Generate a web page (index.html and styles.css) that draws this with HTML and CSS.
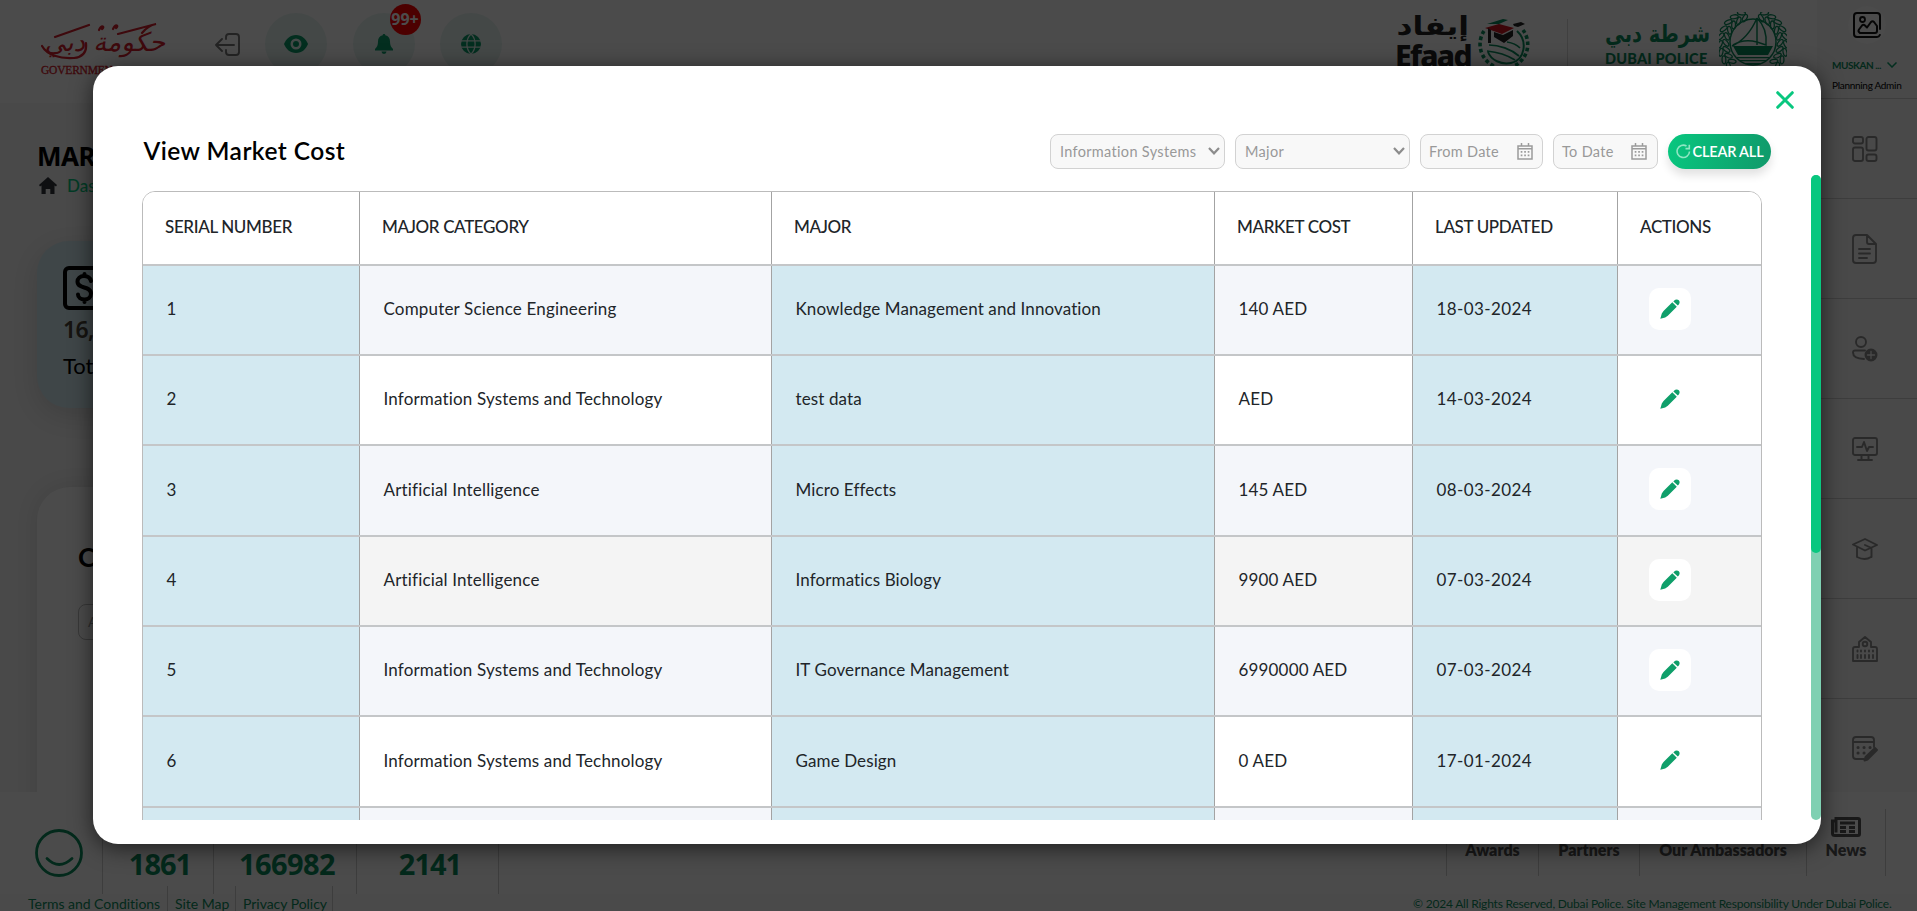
FILE: index.html
```html
<!DOCTYPE html>
<html lang="en">
<head>
<meta charset="utf-8">
<title>View Market Cost</title>
<link rel="stylesheet" href="styles.css">
</head>
<body>
<svg class="defs" width="0" height="0">
  <symbol id="pencil" viewBox="0 0 20 20"><path d="M14 1.800c1.400-1.500 3.600-1.600 4.800-.5s1.100 3.300-.4 4.700l-.6.600-4.400-4.200zM12.300 3.300l4.500 4.400-9 9-2.600 1.700L.3 19.800l1.500-5.300 1.700-2.600z"/></symbol>
  <symbol id="cal" viewBox="0 0 16 17"><path fill="none" stroke="#9b9b9b" stroke-width="1.500" d="M1 3h14v13H1zM4.500 0v3M11.500 0v3"/><path fill="#9b9b9b" d="M1 5h14v1.600H1zM3.700 8h1.700v1.700H3.700zm3.500 0h1.700v1.700H7.200zm3.500 0h1.700v1.700h-1.700zM3.700 11.500h1.700v1.700H3.700zm3.500 0h1.700v1.700H7.200zm3.500 0h1.700v1.700h-1.700z"/></symbol>
  <g id="leaves"><ellipse cx="31" cy="5" rx="1.900" ry="4" transform="rotate(125 31 5)"/><ellipse cx="32" cy="-1" rx="1.900" ry="4" transform="rotate(60 32 -1)"/></g>
  <g id="branch"><use href="#leaves" transform="rotate(24 34 32)"/><use href="#leaves" transform="rotate(38 34 32)"/><use href="#leaves" transform="rotate(52 34 32)"/><use href="#leaves" transform="rotate(66 34 32)"/><use href="#leaves" transform="rotate(80 34 32)"/><use href="#leaves" transform="rotate(94 34 32)"/><use href="#leaves" transform="rotate(108 34 32)"/><use href="#leaves" transform="rotate(122 34 32)"/><use href="#leaves" transform="rotate(136 34 32)"/></g>
</svg>
<div class="page">
  <div class="upper">
    <div class="main">
      <header class="topbar">
        <div class="gov">
          <div class="gov-ar" dir="rtl">حكومة دبي</div>
          <svg class="gov-swoosh" width="126" height="48" viewBox="0 0 126 48"><g fill="none" stroke="#d0202c" stroke-width="2.200" stroke-linecap="round"><path d="M1 24c5 9 18 13 32 12 9-1 13-6 12-15M14 15 48 3M77 12l38-10c-5 1-10 4-14 9M58 8c3-6 6-3 3-1M72 7c3-6 6-3 3-1"/></g></svg>
          <div class="gov-en">GOVERNMEN</div>
        </div>
        <svg class="logout" width="26" height="26" viewBox="0 0 26 26"><path fill="none" stroke="#777" stroke-width="1.900" stroke-linecap="round" stroke-linejoin="round" d="M11 7V5q0-3 3-3h7q3 0 3 3v15q0 3-3 3h-7q-3 0-3-3v-2M19 13H1m6-6-6 6 6 6"/></svg>
        <div class="round"><svg width="24" height="18" viewBox="0 0 24 18"><path fill="#0b9b68" fill-rule="evenodd" d="M12 0C6 0 2 4 0 9c2 5 6 9 12 9s10-4 12-9c-2-5-6-9-12-9zm0 3.500a5.500 5.500 0 1 1 0 11 5.500 5.500 0 0 1 0-11zM12 6a3 3 0 1 0 0 6 3 3 0 0 0 0-6z"/></svg></div>
        <div class="round bell"><svg width="18" height="20" viewBox="0 0 18 20"><path fill="#0b9b68" d="M9 0c.8 0 1.300.5 1.300 1.300C13.500 2 15 4.500 15 7.500c0 4 1 5.500 3 7.500v1.500H0V15c2-2 3-3.500 3-7.500 0-3 1.500-5.500 4.700-6.200C7.700.5 8.200 0 9 0zM6.500 17.500h5a2.500 2.500 0 0 1-5 0z"/></svg><span class="badge">99+</span></div>
        <div class="round"><svg width="20" height="20" viewBox="0 0 20 20"><circle cx="10" cy="10" r="10" fill="#0b9b68"/><path fill="none" stroke="#dfeeea" stroke-width="1.300" d="M0 6.800h20M0 13.200h20M10 0c-5.500 5-5.500 15 0 20M10 0c5.500 5 5.500 15 0 20"/></svg></div>
        <div class="efaad"><div class="efaad-ar" dir="rtl">إيفاد</div><div class="efaad-en">Efaad</div></div>
        <svg class="efaad-logo" width="54" height="54" viewBox="0 0 54 54"><path fill="none" stroke="#0b8a5c" stroke-width="3.600" stroke-dasharray="3.600 2.600" d="M7 12a24 24 0 0 0 10 35m29-36a24 24 0 0 1-9 36"/><path fill="none" stroke="#0b8a5c" stroke-width="2" d="M40 12c11 10 8 29-6 32-10 2-20-3-23-11"/><path fill="none" stroke="#0b8a5c" stroke-width="1.700" d="M12 26c10 0 22 4 30 11M10 32c10 1 20 4 28 9M30 23c6 1 10 3 13 6"/><path fill="#0b8a5c" d="m10 5 16-5 5 1-9 4zM16 46q12 7 24 0l-3 6q-9 3-17 0z"/><path fill="#c8141e" d="m8 9 14-4 15 4-12 6z"/><path fill="#222" d="m36 5 8-2 4 2-7 3-4-1zM17 13l9 3 10-5v6l-9 7-10-6zM11 9l3 2v13h-3z"/></svg>
        <div class="logo-sep"></div>
        <div class="police"><div class="police-ar" dir="rtl">شرطة دبي</div><div class="police-en">DUBAI POLICE</div></div>
        <svg class="police-logo" width="68" height="62" viewBox="0 0 68 62"><g fill="none" stroke="#0b8a5c" stroke-width="1.300"><use href="#branch"/><use href="#branch" transform="translate(68) scale(-1 1)"/></g><circle cx="34" cy="30" r="23" fill="none" stroke="#0b8a5c" stroke-width="1.500"/><path fill="#0b8a5c" d="M14 34h40l-5 9H19zM18 45h32v1.200H18zm3 3h26v1.200H21zm5 3h16v1.200H26z"/><path fill="none" stroke="#0b8a5c" stroke-width="1.500" d="M38 6v27M38 6C32 20 24 29 13 34M14 33c8-5 17-5 24-3M38 6c8 8 10 17 9 27l-9-3"/></svg>
      </header>
      <h1 class="page-title">MAR</h1>
      <div class="crumb"><svg width="18" height="17" viewBox="0 0 18 17"><path fill="#30353b" d="m9 0 9 8-1 1.500-1.500-1V17h-4.200v-5H6.700v5H2.500V8.500L1 9.500 0 8z"/></svg><span>Das</span></div>
      <section class="stat">
        <svg width="44" height="44" viewBox="0 0 44 44"><rect x="2" y="2" width="60" height="40" rx="4" fill="none" stroke="#000" stroke-width="4"/><path fill="none" stroke="#000" stroke-width="4" stroke-linecap="round" d="M28 15c-1-4-4-5-7-5-4 0-6.500 2.500-6.500 5.500 0 8 13.500 4 13.500 12 0 4-3 6-6.500 6s-6.500-2-6.500-5M21.500 8v2m0 24v2"/></svg>
        <div class="stat-num">16,</div>
        <div class="stat-label">Tot</div>
      </section>
      <section class="chart"><div class="chart-title">C</div><div class="chart-select">A</div></section>
    </div>
    <aside class="rail">
      <div class="user">
        <div class="avatar"><svg width="28" height="26" viewBox="0 0 28 26"><path fill="none" stroke="#111" stroke-width="2" stroke-linecap="round" stroke-linejoin="round" d="M27 17V4q0-3-3-3H4Q1 1 1 4v18q0 3 3 3h20q2 0 2.800-2M6 20q-1-1 0-2.500l3-4q1.500-1.500 3 0l2 2 4-5.500q1.500-1.500 3 0l3 4v5q0 2-2 2H7z"/><circle cx="9.500" cy="7.500" r="2.500" fill="none" stroke="#111" stroke-width="1.800"/></svg></div>
        <div class="user-name">MUSKAN ... <svg width="10" height="6" viewBox="0 0 10 6"><path fill="none" stroke="#0b9b68" stroke-width="1.500" d="m.5.5 4.500 4.500L9.500.5"/></svg></div>
        <div class="user-role">Plannning Admin</div>
      </div>
      <div class="rail-item"><svg width="26" height="26" viewBox="0 0 26 26"><rect x="1" y="1" width="10" height="6.500" rx="2"/><rect x="1" y="11.500" width="10" height="13.500" rx="2"/><rect x="14.500" y="1" width="10" height="13.500" rx="2"/><rect x="14.500" y="18.500" width="10" height="6.500" rx="2"/></svg></div>
      <div class="rail-item"><svg width="26" height="30" viewBox="0 0 26 30"><path d="M15 1H4Q1 1 1 4v22q0 3 3 3h17q3 0 3-3V10zv7q0 2 2 2h7M7 15h11M7 19.500h11M7 24h8"/></svg></div>
      <div class="rail-item"><svg width="26" height="26" viewBox="0 0 26 26"><circle cx="9" cy="6" r="5"/><path d="M13 14.500H3q-2 0-2 2 0 6 11 6.500"/><circle cx="19" cy="19" r="5.500" fill="#8a8a8a"/><path d="M19 15.500v7M15.500 19h7" class="cut"/></svg></div>
      <div class="rail-item"><svg width="26" height="24" viewBox="0 0 26 24"><rect x="1" y="1" width="24" height="17" rx="2"/><path d="M5 10h5l2-5 3 9 2-4h4M9.500 18v4m7-4v4M6 23h14"/></svg></div>
      <div class="rail-item"><svg width="26" height="22" viewBox="0 0 26 22"><path d="M1 6.500 13 1l12 6-12 5.500zM5 9.500V19q8 4 14 0M13 7l6.500 3v9"/></svg></div>
      <div class="rail-item"><svg width="26" height="26" viewBox="0 0 26 26"><path d="M1 25V13q0-2 2-2h4V6l6-5 6 5v5h4q2 0 2 2v12z"/><circle cx="13" cy="8" r="2.300"/><path d="M5.500 14.500v1M9 14.500v1m4-1v1m4-1v1m4-1v1M5.500 19v3M9 19v3m4-3v3m4-3v3m4-3v3"/></svg></div>
      <div class="rail-item"><svg width="26" height="26" viewBox="0 0 26 26"><path d="M12 23H4q-3 0-3-3V4q0-3 3-3h15q3 0 3 3v7M1 6h21"/><path stroke-dasharray=".1 5.900" stroke-width="3" d="M6 11.500h13M6 17h9"/><path fill="#8a8a8a" d="m23 12 2 2-9.500 9.500-3 1 1-3.500z"/></svg></div>
    </aside>
  </div>
  <footer class="footer">
    <div class="foot-top">
      <div class="smile"><svg width="48" height="50" viewBox="0 0 48 50"><g fill="none" stroke="#0b8a5c" stroke-width="2.800" stroke-linecap="round"><circle cx="24" cy="25" r="22.500"/><path d="M12 30.500q12 12 25 0"/></g></svg></div>
      <div class="count c1">1861</div><div class="count c2">166982</div><div class="count c3">2141</div>
      <nav class="foot-nav"><div class="n1">Awards</div><div class="n2">Partners</div><div class="n3">Our Ambassadors</div>
        <div class="n4"><svg width="30" height="20" viewBox="0 0 30 20"><path fill="none" stroke="#555" stroke-width="3" d="M5 1.500h22q1.500 0 1.500 1.500v14q0 1.500-1.500 1.500H4q-2.500 0-2.500-2V4H5zm0 0v14M9 6h15M9 10.500h6m3 0h6M9 14.500h6m3 0h6"/></svg><span>News</span></div></nav>
    </div>
    <div class="foot-bottom">
      <div class="links"><span class="l1">Terms and Conditions</span><span class="l2">Site Map</span><span class="l3">Privacy Policy</span></div>
      <div class="copy">© 2024 All Rights Reserved, Dubai Police. Site Management Responsibility Under Dubai Police.</div>
    </div>
  </footer>
  <div class="overlay"></div>

  <div class="modal">
    <div class="close"><svg width="18" height="18" viewBox="0 0 18 18"><path stroke="#08c77f" stroke-width="3" stroke-linecap="round" d="m1.700 1.700 14.600 14.600m0-14.600L1.700 16.300"/></svg></div>
    <div class="modal-head">
      <h2>View Market Cost</h2>
      <div class="filters">
        <div class="field f1"><span>Information Systems</span><svg width="12" height="8" viewBox="0 0 12 8"><path fill="none" stroke="#8c8c8c" stroke-width="2.200" d="m1 1 5 5.300L11 1"/></svg></div>
        <div class="field f2"><span>Major</span><svg width="12" height="8" viewBox="0 0 12 8"><path fill="none" stroke="#8c8c8c" stroke-width="2.200" d="m1 1 5 5.300L11 1"/></svg></div>
        <div class="field f3"><span>From Date</span><svg width="16" height="17"><use href="#cal"/></svg></div>
        <div class="field f4"><span>To Date</span><svg width="16" height="17"><use href="#cal"/></svg></div>
        <div class="clear"><svg width="15" height="15" viewBox="0 0 15 15"><path fill="none" stroke="#8fe6c3" stroke-width="1.600" d="M10.500 2A6.200 6.200 0 1 0 13.500 7.500M9.500 4.600h3.800V.8"/></svg><span>CLEAR ALL</span></div>
      </div>
    </div>
    <div class="scroll">
      <div class="table">
        <div class="row head"><div>SERIAL NUMBER</div><div>MAJOR CATEGORY</div><div>MAJOR</div><div>MARKET COST</div><div>LAST UPDATED</div><div>ACTIONS</div></div>
        <div class="row tint"><div>1</div><div>Computer Science Engineering</div><div>Knowledge Management and Innovation</div><div>140 AED</div><div>18-03-2024</div><div><i><svg><use href="#pencil"/></svg></i></div></div>
        <div class="row"><div>2</div><div>Information Systems and Technology</div><div>test data</div><div>AED</div><div>14-03-2024</div><div><i><svg><use href="#pencil"/></svg></i></div></div>
        <div class="row tint tall"><div>3</div><div>Artificial Intelligence</div><div>Micro Effects</div><div>145 AED</div><div>08-03-2024</div><div><i><svg><use href="#pencil"/></svg></i></div></div>
        <div class="row hover"><div>4</div><div>Artificial Intelligence</div><div>Informatics Biology</div><div>9900 AED</div><div>07-03-2024</div><div><i><svg><use href="#pencil"/></svg></i></div></div>
        <div class="row tint"><div>5</div><div>Information Systems and Technology</div><div>IT Governance Management</div><div>6990000 AED</div><div>07-03-2024</div><div><i><svg><use href="#pencil"/></svg></i></div></div>
        <div class="row tall"><div>6</div><div>Information Systems and Technology</div><div>Game Design</div><div>0 AED</div><div>17-01-2024</div><div><i><svg><use href="#pencil"/></svg></i></div></div>
        <div class="row tint"><div></div><div></div><div></div><div></div><div></div><div></div></div>
      </div>
    </div>
    <div class="track"><div class="thumb"></div></div>
  </div>
</div>
</body>
</html>
```
FILE: styles.css
```css
* { box-sizing: border-box; }
body { margin: 0; font-family: Lato, "Noto Sans", sans-serif; font-variant-ligatures: none; }
h1, h2 { margin: 0; }
svg { display: block; flex: none; }
.defs { position: absolute; }
.page { position: relative; width: 1917px; height: 911px; overflow: hidden; background: #f3f3f3; }
.upper { display: flex; height: 792px; overflow: hidden; }
.main { width: 1817px; }

.topbar { display: flex; height: 103px; background: #fcfcfc; padding-left: 41px; overflow: hidden; }
.gov { position: relative; width: 126px; color: #d0202c; padding-top: 22px; }
.gov-ar { height: 41px; padding-right: 2px; font: italic 26px/41px "DejaVu Sans", sans-serif; white-space: nowrap; letter-spacing: -1px; }
.gov-swoosh { position: absolute; left: 0; top: 22px; }
.gov-en { font: 11.500px/14px "Liberation Serif", serif; letter-spacing: -.2px; -webkit-text-stroke: .3px; }
.logout { margin: 32px 0 0 48px; }
.round { position: relative; width: 62px; height: 62px; margin: 12.500px 0 0 24px; border-radius: 50%; background: #e4f1ee; display: flex; align-items: center; justify-content: center; }
.round + .round { margin-left: 25.500px; }
.badge { position: absolute; left: 37px; top: -8.500px; width: 31px; height: 31px; border-radius: 50%; background: #f00; color: #fff; font: bold 16px/30px "Noto Sans", sans-serif; text-align: center; }
.efaad { margin: 14px 0 0 893px; width: 74px; color: #222; white-space: nowrap; }
.efaad-ar { font: bold 26px/24px "DejaVu Sans", sans-serif; height: 26px; transform: scaleX(1.200); transform-origin: right; }
.efaad-en { font: 800 30px/31px "Noto Sans", sans-serif; letter-spacing: -1.700px; }
.efaad-logo { margin: 19px 0 0 8px; }
.logo-sep { width: 1px; height: 60px; margin: 19px 0 0 36px; background: #d5d5d5; }
.police { margin: 19px 0 0 37px; width: 105px; color: #0b8a5c; white-space: nowrap; }
.police-ar { font: bold 24px/30px "DejaVu Sans", sans-serif; height: 31px; width: 130px; margin-left: -25px; transform: scaleX(.81); transform-origin: right; }
.police-en { font: 900 14.500px/18px Lato, sans-serif; letter-spacing: .2px; }
.police-logo { margin: 12px 0 0 9px; }

.page-title { padding: 36px 0 0 37px; font: bold 26px/34px "Noto Sans", sans-serif; letter-spacing: -.5px; height: 70px; }
.crumb { display: flex; align-items: center; gap: 10px; height: 25px; margin-bottom: 43px; padding-left: 39px; font-size: 17px; font-weight: 500; color: #08c77f; }
.stat { margin: 0 0 0 37px; width: 300px; height: 167px; padding: 25px 0 0 26px; border-radius: 32px; background: #d3eaf2; box-shadow: 0 8px 26px rgba(0,0,0,.12); }
.stat-num { margin-top: 2px; font: 600 23px/34px "Noto Sans", sans-serif; letter-spacing: -.6px; color: #4a4438; }
.stat-label { margin-top: 3px; font-size: 22px; line-height: 34px; }
.chart { margin: 79px 0 0 37px; width: 1000px; height: 400px; padding: 53px 0 0 41px; border-radius: 33px; background: #fcfcfc; box-shadow: 0 0 22px rgba(0,0,0,.1); }
.chart-title { font: bold 27px/34px Lato, sans-serif; }
.chart-select { margin-top: 30px; width: 200px; height: 36px; border: 1px solid #bbb; border-radius: 8px; padding-left: 9px; font-size: 14px; line-height: 34px; color: #999; }

.rail { width: 100px; background: #f3f3f3; }
.user { height: 99px; padding: 6px 0 0 15px; border-bottom: 1px solid #ccc; }
.avatar { width: 38px; height: 38px; margin-left: 16px; border-radius: 50%; background: #fafafa; display: flex; align-items: center; justify-content: center; }
.user-name { display: flex; align-items: center; gap: 6px; height: 16px; margin-top: 13px; font-size: 10px; font-weight: bold; color: #0b8a5c; white-space: nowrap; letter-spacing: -.45px; }
.user-role { margin-top: 4px; font-size: 10px; line-height: 16px; white-space: nowrap; letter-spacing: -.3px; }
.rail-item { display: flex; align-items: center; justify-content: center; height: 100px; padding-right: 5px; border-bottom: 1px solid #ccc; }
.rail-item:last-child { border: 0; }
.rail-item svg { fill: none; stroke: #8a8a8a; stroke-width: 1.900; stroke-linecap: round; stroke-linejoin: round; }
.rail-item .cut { stroke: #f3f3f3; stroke-width: 1.300; }

.footer { position: relative; height: 119px; background: #fcfcfc; }
.foot-top { display: flex; height: 102px; }
.smile { width: 103px; padding: 36px 0 0 35px; border-right: 1px solid #ccc; }
.count { border-right: 1px solid #ccc; padding-top: 51px; text-align: center; color: #0b8a5c; font: bold 29px/42px "Noto Sans", sans-serif; letter-spacing: -1px; }
.c1 { width: 111px; padding-left: 4px; } .c2 { width: 143px; padding-left: 4px; } .c3 { width: 142px; padding-left: 5px; }
.count.c2 { letter-spacing: -.6px; }
.foot-nav { display: flex; margin-left: 947px; padding-top: 17px; height: 84px; font-size: 16px; font-weight: 800; color: #555; }
.foot-nav > div { border-right: 1px solid #ccc; padding-top: 25px; line-height: 32px; text-align: center; white-space: nowrap; }
.foot-nav .n1 { width: 93px; border-left: 1px solid #ccc; } .n2 { width: 101px; } .n3 { width: 167px; }
.foot-nav .n4 { width: 79px; padding-top: 8px; }
.n4 svg { margin: 0 auto; }
.n4 span { display: block; margin-top: -3px; }
.foot-bottom { display: flex; justify-content: space-between; height: 17px; background: #f8f8f8; color: #0b8a5c; white-space: nowrap; }
.links { display: flex; margin-top: -8px; height: 25px; line-height: 14px; font-size: 14px; padding-left: 28px; letter-spacing: -.03px; }
.links span { border-right: 1px solid #ccc; height: 25px; padding-top: 10.500px; }
.l1 { width: 140px; } .l2 { width: 68px; padding-left: 7px; } .l3 { width: 97px; padding-left: 7px; }
.copy { width: 504px; font-size: 12px; line-height: 14px; padding-top: 3px; letter-spacing: -.2px; }

.overlay { position: absolute; inset: 0; background: rgba(0,0,0,.7); }

.modal { position: absolute; left: 93px; top: 65.600px; width: 1728px; height: 778.800px; border-radius: 25px; background: #fff; box-shadow: 0 4px 22px rgba(0,0,0,.6); }
.close { padding: 25.400px 27px 0 0; display: flex; justify-content: flex-end; }
.modal-head { display: flex; justify-content: space-between; align-items: center; margin-top: 24.500px; height: 36px; padding: 0 50px 0 50.500px; }
.modal-head h2 { font-size: 24.500px; font-weight: 600; line-height: 34px; letter-spacing: .45px; }
.filters { display: flex; height: 35px; }
.field { display: flex; align-items: center; justify-content: space-between; margin-right: 10px; border: 1px solid #d2d2d2; border-radius: 8px; background: #f8f8f8; color: #999; font-size: 14.500px; letter-spacing: .32px; padding: 0 4px 0 9px; white-space: nowrap; }
.f1, .f2 { width: 175px; } .f3 { width: 123px; padding: 0 9px 0 8px; } .f4 { width: 105px; padding: 0 10px 0 8px; }
.clear { display: flex; align-items: center; justify-content: center; gap: 2px; width: 103px; border-radius: 18px; background: linear-gradient(100deg, #08c77f, #10996a); box-shadow: 0 6px 10px rgba(0,0,0,.12); color: #fff; font-size: 14.500px; font-weight: 600; white-space: nowrap; letter-spacing: -.2px; }

.scroll { margin: 21.500px 0 0 49px; width: 1620px; height: 628.600px; overflow: hidden; }
.table { border: 1px solid #bbb; border-radius: 13px; height: 740px; overflow: hidden; }
.row { position: relative; display: grid; grid-template-columns: 217px 412px 443px 198px 205px 143px; height: 90px; border-bottom: 2px solid #c8c8c8; }
.row.tall { height: 91px; }
.row > div { display: flex; align-items: center; padding-left: 23.500px; border-right: 1px solid #a3a3a3; height: calc(100% + 2px); font-size: 17px; color: #212529; white-space: nowrap; padding-bottom: 4px; letter-spacing: .17px; }
.row > div:last-child { border-right: 0; padding-left: 31px; }
.row > div:nth-child(odd) { background: #d3e9f1; }
.row > div:nth-child(3) { letter-spacing: .11px; }
.row > div:nth-child(5) { letter-spacing: .4px; }
.row::after { content: ""; position: absolute; left: 0; right: 0; bottom: -2px; height: 2px; background: #c4c6c8; }
.row.tint { background: #f4f6fa; }
.row.hover { background: #f4f4f4; }
.row.head { height: 74px; background: #fff; }
.row.head > div { background: none; padding-left: 22px; font-weight: 500; letter-spacing: -.36px; }
.row i { width: 42px; height: 42px; border-radius: 10px; background: #fff; display: flex; align-items: center; justify-content: center; }
.row i svg { width: 20px; height: 20px; fill: #0f9f6a; }
.track { position: absolute; right: 0; top: 109px; width: 10px; height: 645.500px; border-radius: 5px; background: #7fd0b2; }
.thumb { height: 378px; border-radius: 5px; background: #08c77f; }
```
